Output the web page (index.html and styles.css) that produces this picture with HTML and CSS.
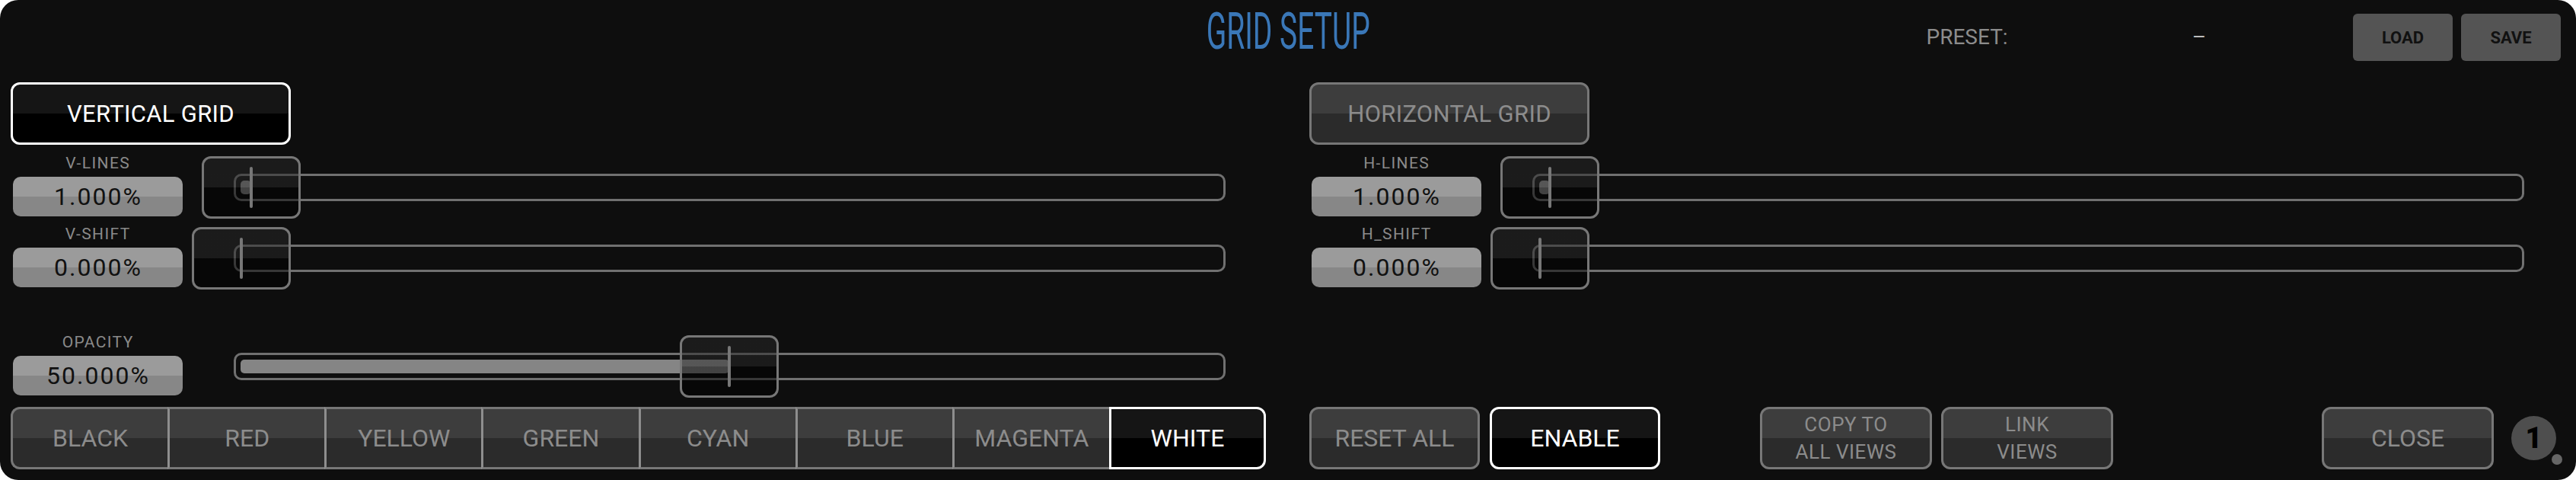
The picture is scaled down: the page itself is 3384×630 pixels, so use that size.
FILE: index.html
```html
<!DOCTYPE html>
<html>
<head>
<meta charset="utf-8">
<title>Grid Setup</title>
<link rel="stylesheet" href="styles.css">
</head>
<body>
<div class="panel">
  <header class="header">
    <div class="header-side"></div>
    <h1 class="title"><span class="title-text">GRID SETUP</span></h1>
    <div class="preset">
      <span class="preset-label">PRESET:</span>
      <span class="preset-value">–</span>
      <div class="preset-btns">
        <div class="pbtn">LOAD</div>
        <div class="pbtn">SAVE</div>
      </div>
    </div>
  </header>

  <main class="main">
    <section class="col">
      <div class="mode on">VERTICAL GRID</div>

      <div class="row first">
        <div class="param">
          <div class="plabel">V-LINES</div>
          <div class="pvalue">1.000%</div>
        </div>
        <div class="slider">
          <div class="track" style="--v:0.01">
            <div class="fill"></div>
            <div class="thumb"></div>
          </div>
        </div>
      </div>

      <div class="row">
        <div class="param">
          <div class="plabel">V-SHIFT</div>
          <div class="pvalue">0.000%</div>
        </div>
        <div class="slider">
          <div class="track" style="--v:0">
            <div class="thumb"></div>
          </div>
        </div>
      </div>

      <div class="row far">
        <div class="param">
          <div class="plabel">OPACITY</div>
          <div class="pvalue">50.000%</div>
        </div>
        <div class="slider">
          <div class="track" style="--v:0.5">
            <div class="fill"></div>
            <div class="thumb"></div>
          </div>
        </div>
      </div>

      <div class="segs">
        <div class="seg">BLACK</div>
        <div class="seg">RED</div>
        <div class="seg">YELLOW</div>
        <div class="seg">GREEN</div>
        <div class="seg">CYAN</div>
        <div class="seg">BLUE</div>
        <div class="seg">MAGENTA</div>
        <div class="seg on">WHITE</div>
      </div>
    </section>

    <section class="col">
      <div class="mode">HORIZONTAL GRID</div>

      <div class="row first">
        <div class="param">
          <div class="plabel">H-LINES</div>
          <div class="pvalue">1.000%</div>
        </div>
        <div class="slider">
          <div class="track" style="--v:0.01">
            <div class="fill"></div>
            <div class="thumb"></div>
          </div>
        </div>
      </div>

      <div class="row">
        <div class="param">
          <div class="plabel">H_SHIFT</div>
          <div class="pvalue">0.000%</div>
        </div>
        <div class="slider">
          <div class="track" style="--v:0">
            <div class="thumb"></div>
          </div>
        </div>
      </div>

      <div class="actions">
        <div class="btn">RESET ALL</div>
        <div class="btn on gap-s">ENABLE</div>
        <div class="btn two gap-l"><span>COPY TO</span><span>ALL VIEWS</span></div>
        <div class="btn two gap-s"><span>LINK</span><span>VIEWS</span></div>
        <div class="btn push">CLOSE</div>
        <div class="badge">1</div>
      </div>
    </section>
  </main>
</div>
</body>
</html>
```

FILE: styles.css
```css
* { box-sizing: border-box; }

html, body {
  margin: 0;
  padding: 0;
  background: #ffffff;
}

body {
  width: 3384px;
  height: 630px;
  overflow: hidden;
  font-family: Roboto, "Liberation Sans", sans-serif;
}

.panel {
  width: 3384px;
  height: 630px;
  background: #0e0e0e;
  border-radius: 24px;
  overflow: hidden;
  display: flex;
  flex-direction: column;
}

/* ---------- header ---------- */
.header {
  height: 108px;
  flex: none;
  display: grid;
  grid-template-columns: 1fr auto 1fr;
  align-items: start;
  padding: 0 20px;
}

.title {
  margin: 2px 0 0;
  font-size: 66px;
  line-height: 80px;
  font-weight: 400;
  color: #3a77b7;
  white-space: nowrap;
}

.title-text {
  display: inline-block;
  transform: scaleX(0.59);
}

.preset {
  display: flex;
  justify-content: flex-end;
  align-items: center;
  height: 62px;
  margin-top: 18px;
}

.preset-label {
  font-size: 28px;
  line-height: 30px;
  color: #8c8c8c;
}

.preset-value {
  font-size: 28px;
  line-height: 30px;
  color: #bdbdbd;
  margin-left: 242px;
}

.preset-btns {
  display: flex;
  gap: 11px;
  margin-left: 193px;
}

.pbtn {
  width: 131px;
  height: 62px;
  background: #545454;
  border-radius: 6px;
  font-size: 22px;
  font-weight: 700;
  color: #111;
  display: flex;
  align-items: center;
  justify-content: center;
}

/* ---------- main ---------- */
.main {
  display: grid;
  grid-template-columns: 1649px 1649px;
  column-gap: 57px;
  padding-left: 14px;
  height: 508px;
}

.col {
  display: flex;
  flex-direction: column;
  height: 508px;
}

.mode {
  width: 368px;
  height: 82px;
  flex: none;
  border: 3px solid #777;
  border-radius: 12px;
  background: linear-gradient(#3d3d3d 50%, #2b2b2b 50%);
  color: #8c8c8c;
  font-size: 31px;
  letter-spacing: 0.3px;
  display: flex;
  align-items: center;
  justify-content: center;
}

.mode.on {
  border-color: #fff;
  background: linear-gradient(#151515 50%, #000 50%);
  color: #fff;
}

.row {
  display: grid;
  grid-template-columns: 226px 1fr;
  height: 84px;
  flex: none;
  margin-top: 9px;
}

.row.first { margin-top: 11px; }
.row.far { margin-top: 58px; }

.param {
  display: flex;
  flex-direction: column;
  align-items: center;
  padding-left: 2px;
}

.plabel {
  font-size: 21px;
  line-height: 26px;
  color: #8a8a8a;
  letter-spacing: 1.4px;
  padding-left: 1.4px;
}

.pvalue {
  margin-top: 5px;
  width: 223px;
  height: 52px;
  border-radius: 10px;
  background: linear-gradient(#9b9b9b 50%, #878787 50%);
  color: #111;
  font-size: 32px;
  letter-spacing: 2px;
  padding-left: 2px;
  display: flex;
  align-items: center;
  justify-content: center;
}

.slider {
  display: flex;
  align-items: center;
  padding: 0 53px 0 67px;
}

.track {
  position: relative;
  flex: 1;
  height: 36px;
  margin-top: 5px;
  border: 3px solid #707070;
  border-radius: 10px;
}

.fill {
  position: absolute;
  left: 6px;
  top: 6px;
  bottom: 6px;
  width: calc(1px + var(--v) * (100% - 15px));
  background: #858585;
  border-radius: 5px;
}

.thumb {
  position: absolute;
  top: 50%;
  left: calc(7px + var(--v) * (100% - 15px));
  width: 130px;
  height: 82px;
  transform: translate(-50%, -50%);
  border: 3px solid #777;
  border-radius: 12px;
  background: linear-gradient(rgba(40, 40, 40, 0.5) 50%, rgba(0, 0, 0, 0.5) 50%);
}

.thumb::after {
  content: "";
  position: absolute;
  left: 50%;
  top: 11px;
  bottom: 11px;
  width: 4px;
  margin-left: -2px;
  background: #777;
  border-radius: 2px;
}

/* ---------- colour segments ---------- */
.segs {
  margin-top: auto;
  height: 82px;
  flex: none;
  display: grid;
  grid-template-columns: repeat(8, 1fr);
}

.seg {
  border-top: 3px solid #777;
  border-bottom: 3px solid #777;
  border-left: 3px solid #8e8e8e;
  background: linear-gradient(#3d3d3d 50%, #2b2b2b 50%);
  color: #8c8c8c;
  font-size: 32px;
  display: flex;
  align-items: center;
  justify-content: center;
}

.seg:first-child {
  border-left-color: #777;
  border-radius: 12px 0 0 12px;
}

.seg:last-child {
  border-right: 3px solid #777;
  border-radius: 0 12px 12px 0;
}

.seg.on {
  border-color: #fff;
  background: linear-gradient(#151515 50%, #000 50%);
  color: #fff;
}

/* ---------- actions ---------- */
.actions {
  margin-top: auto;
  height: 82px;
  flex: none;
  display: flex;
  align-items: center;
}

.btn {
  width: 224px;
  height: 82px;
  flex: none;
  border: 3px solid #777;
  border-radius: 12px;
  background: linear-gradient(#3d3d3d 50%, #2b2b2b 50%);
  color: #8c8c8c;
  font-size: 32px;
  display: flex;
  flex-direction: column;
  align-items: center;
  justify-content: center;
}

.btn.two {
  width: 226px;
  font-size: 26px;
  line-height: 36px;
  letter-spacing: 0.5px;
}

.btn.on {
  border-color: #fff;
  background: linear-gradient(#151515 50%, #000 50%);
  color: #fff;
}

.gap-s { margin-left: 13px; }
.btn.two.gap-s { margin-left: 12px; }
.gap-l { margin-left: 131px; }

.push {
  margin-left: auto;
  width: 226px;
}

.badge {
  position: relative;
  flex: none;
  width: 59px;
  height: 58px;
  margin-left: 23px;
  margin-right: 11px;
  border-radius: 50%;
  background: #4e4e4e;
  color: #000;
  font-size: 38px;
  font-weight: 900;
  display: flex;
  align-items: center;
  justify-content: center;
}

.badge::after {
  content: "";
  position: absolute;
  left: 53px;
  top: 50px;
  width: 14px;
  height: 14px;
  border-radius: 50%;
  background: #666;
  box-shadow: 0 0 0 2px #0e0e0e;
}
```
